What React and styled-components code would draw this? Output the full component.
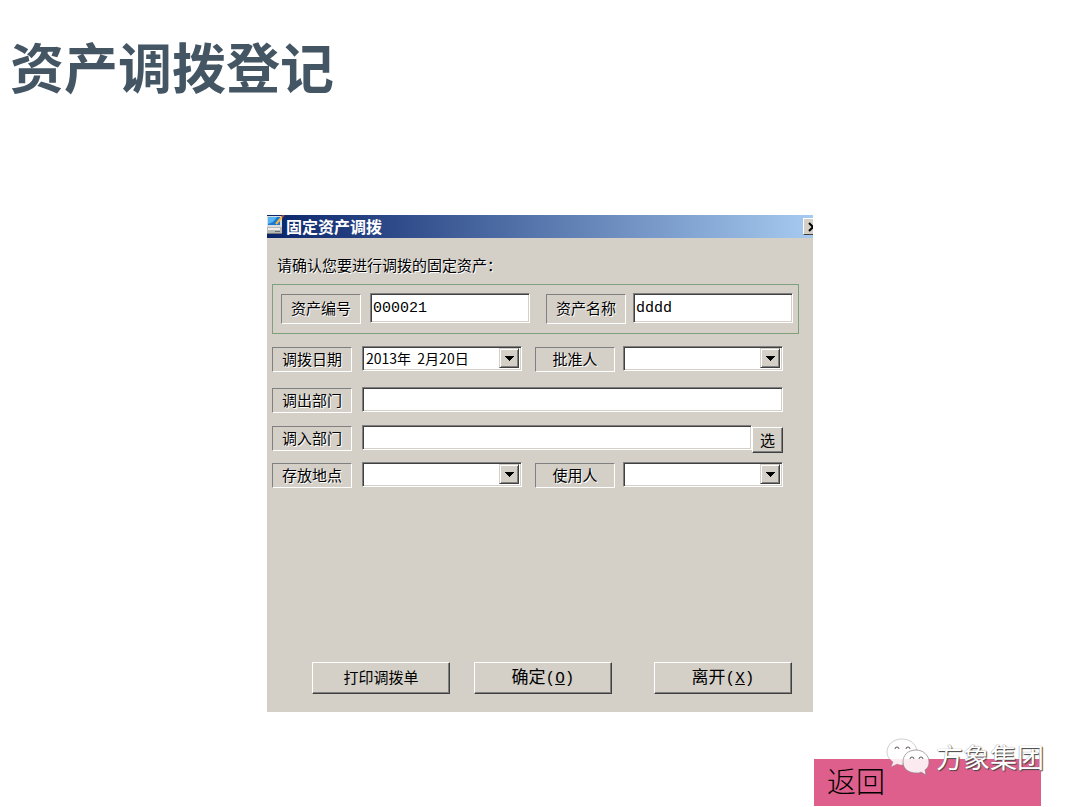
import React, { useState } from "react";
import styled, { createGlobalStyle } from "styled-components";

const assetFields = [
  { id: "assetNo", label: "资产编号", value: "000021" },
  { id: "assetName", label: "资产名称", value: "dddd" },
]

const App = () => {
  const [asset, setAsset] = useState({ assetNo: assetFields[0].value, assetName: assetFields[1].value })

  return (
    <Page>
      <GlobalStyle />
      <Heading>资产调拨登记</Heading>
      <Dialog>
        <TitleBar>
          <AppIcon />
          <DialogTitle>固定资产调拨</DialogTitle>
          <CloseButton type="button" aria-label="关闭">
            <svg width="10" height="10" viewBox="0 0 10 10">
              <path d="M1 1L9 9M9 1L1 9" stroke="#000" strokeWidth="2" />
            </svg>
          </CloseButton>
        </TitleBar>
        <Prompt>请确认您要进行调拨的固定资产：</Prompt>
        <AssetGroup>
          {assetFields.map((item, index) => (
            <React.Fragment key={item.id}>
              <Caption htmlFor={item.id} $tall $before={index ? 16 : 0} $after={index ? 7 : 9}>
                {item.label}
              </Caption>
              <TextField
                id={item.id}
                $tall
                value={asset[item.id]}
                onChange={(e) => setAsset({ ...asset, [item.id]: e.target.value })}
              />
            </React.Fragment>
          ))}
        </AssetGroup>
        <FormRows>
          <Row>
            <Caption htmlFor="date" $after={10}>调拨日期</Caption>
            <DropDown id="date" options={["2013年\u00a0 2月20日"]} />
            <Caption htmlFor="approver" $before={13} $after={8}>批准人</Caption>
            <DropDown id="approver" options={[""]} />
          </Row>
          <Row>
            <Caption htmlFor="fromDept" $after={10}>调出部门</Caption>
            <TextField id="fromDept" />
          </Row>
          <Row>
            <Caption htmlFor="toDept" $after={10}>调入部门</Caption>
            <TextField id="toDept" />
            <PickButton type="button">选</PickButton>
          </Row>
          <Row>
            <Caption htmlFor="place" $after={10}>存放地点</Caption>
            <DropDown id="place" options={[""]} />
            <Caption htmlFor="user" $before={13} $after={8}>使用人</Caption>
            <DropDown id="user" options={[""]} />
          </Row>
        </FormRows>
        <Actions>
          <ActionButton type="button">打印调拨单</ActionButton>
          <ActionButton type="button" $large>确定<Key>(<u>O</u>)</Key></ActionButton>
          <ActionButton type="button" $large $last>离开<Key>(<u>X</u>)</Key></ActionButton>
        </Actions>
      </Dialog>
      <Footer>
        <BackLink href="#back">返回</BackLink>
        <Watermark>
          <ChatLogo />
          <span>方象集团</span>
        </Watermark>
      </Footer>
    </Page>
  )
}

export default App

const DropDown = ({ id, options }) => (
  <SelectBox>
    <Select id={id}>
      {options.map((option, index) => (
        <option key={index}>{option}</option>
      ))}
    </Select>
    <Arrow>
      <svg width="9" height="5" viewBox="0 0 9 5">
        <path d="M0 0H9V1H8V2H7V3H6V4H5V5H4V4H3V3H2V2H1V1H0Z" fill="#000" />
      </svg>
    </Arrow>
  </SelectBox>
)

const AppIcon = () => (
  <svg width="18" height="20" viewBox="0 0 18 20">
    <rect x="0" y="1" width="15" height="11" fill="#d8dde0" />
    <rect x="1" y="2" width="12" height="8" fill="#1c78d0" />
    <path d="M1 2H10L6 7L1 9Z" fill="#55b4f2" />
    <rect x="0" y="12" width="15" height="7" fill="#b9b9b4" />
    <rect x="1" y="13" width="12" height="2" fill="#eeeeea" />
    <rect x="8" y="16" width="5" height="1" fill="#6d7072" />
    <rect x="0" y="18" width="15" height="1" fill="#77797b" />
    <path d="M9 9L15 2" stroke="#f6b53c" strokeWidth="2" />
    <path d="M15 2L17 0" stroke="#a14a34" strokeWidth="2" />
  </svg>
)

const ChatLogo = () => (
  <svg width="44" height="38" viewBox="0 0 44 38">
    <path
      d="M16 1C7 1 1 7 1 14C1 18 3 21 7 24L5 29L11 26C13 27 15 27 17 27C17 19 22 13 31 12C29 5 23 1 16 1Z"
      fill="#fff" fillOpacity="0.88" stroke="#8d8288" strokeOpacity="0.4"
    />
    <path
      d="M30 12C22 12 17 17 17 24C17 31 23 35 30 35C32 35 34 35 35 34L40 37L39 32C42 30 43 27 43 24C43 17 37 12 30 12Z"
      fill="#fff" fillOpacity="0.88" stroke="#8d8288" strokeOpacity="0.7"
    />
    <g fill="none" stroke="#5c5459">
      <path d="M9 11A2 2 0 0 1 13 11M20 11A2 2 0 0 1 24 11" />
      <path d="M24 21A2 2 0 0 1 28 21M33 21A2 2 0 0 1 37 21" />
    </g>
  </svg>
)

const GlobalStyle = createGlobalStyle`
    * {
        box-sizing: border-box;
    }

    body {
        margin: 0;
        background: #fff;
        font-family: "Noto Sans CJK SC", sans-serif;
    }

    button, input, select {
        font-family: inherit;
        color: #000;
    }
`

const Page = styled.main`
    display: flex;
    flex-direction: column;
`

const Heading = styled.h1`
    margin: 0;
    padding: 36px 10px 119px;
    font-size: 54px;
    line-height: 60px;
    font-weight: 700;
    color: #445564;
`

const Dialog = styled.form`
    width: 100%;
    max-width: 546px;
    margin: 0 auto;
    background: #d4d0c8;
    font-size: 15px;
`

const TitleBar = styled.div`
    display: flex;
    align-items: flex-start;
    height: 23px;
    background: linear-gradient(to right, #0a246a, #a6caf0);
`

const DialogTitle = styled.h2`
    margin: 0 auto 0 1px;
    font-size: 16px;
    line-height: 22px;
    font-weight: 700;
    color: #fff;
`

const CloseButton = styled.button`
    display: flex;
    align-items: center;
    width: 10px;
    height: 17px;
    margin-top: 3px;
    padding: 0 0 0 4px;
    overflow: hidden;
    border: solid;
    border-width: 1px 0 1px 1px;
    border-color: #fff #404040 #404040 #fff;
    background: #d4d0c8;

    svg {
        flex: none;
    }
`

const Prompt = styled.p`
    margin: 0;
    padding: 17px 10px 9px;
    line-height: 20px;
    text-shadow: 1px 1px 0 #fff;
`

const AssetGroup = styled.div`
    display: flex;
    margin: 0 14px 0 5px;
    padding: 8px 5px 9px 8px;
    border: 1px solid #7f9f7f;
`

const FormRows = styled.div`
    display: grid;
    grid-template-rows: 41px 38px 37px 25px;
    padding: 12px 30px 0 5px;
`

const Row = styled.div`
    display: flex;
    align-items: flex-start;
`

const Caption = styled.label`
    flex: none;
    width: 80px;
    height: ${(props) => (props.$tall ? 30 : 25)}px;
    margin: 1px ${(props) => props.$after || 0}px 0 ${(props) => props.$before || 0}px;
    border: 1px solid;
    border-color: #808080 #fff #fff #808080;
    line-height: ${(props) => (props.$tall ? 26 : 22)}px;
    text-align: center;
    text-shadow: 1px 1px 0 #fff;
`

const TextField = styled.input`
    flex: 1;
    min-width: 0;
    height: ${(props) => (props.$tall ? 30 : 25)}px;
    padding: 0 2px;
    border: 1px solid;
    border-color: #808080 #fff #fff #808080;
    border-radius: 0;
    outline: none;
    background: #fff;
    box-shadow: inset 1px 1px 0 #404040, inset -1px -1px 0 #d4d0c8;
    font-family: "Liberation Mono", "Noto Sans CJK SC", monospace;
    font-size: 15px;
`

const SelectBox = styled.div`
    flex: 1;
    min-width: 0;
    display: grid;
    height: 25px;
    padding: 1px 2px 2px 1px;
    border: 1px solid;
    border-color: #808080 #fff #fff #808080;
    background: #fff;
    box-shadow: inset 1px 1px 0 #404040, inset -1px -1px 0 #d4d0c8;
`

const Select = styled.select`
    grid-area: 1 / 1;
    min-width: 0;
    padding: 0 2px;
    border: none;
    outline: none;
    appearance: none;
    background: transparent;
    font-size: 14px;
    line-height: 20px;
`

const Arrow = styled.span`
    grid-area: 1 / 1;
    justify-self: end;
    display: grid;
    place-items: center;
    width: 20px;
    border: 1px solid;
    border-color: #d4d0c8 #404040 #404040 #d4d0c8;
    background: #d4d0c8;
    box-shadow: inset 1px 1px 0 #fff, inset -1px -1px 0 #808080;
    pointer-events: none;
`

const RaisedButton = styled.button`
    padding: 0;
    border: 1px solid;
    border-color: #fff #404040 #404040 #fff;
    background: #d4d0c8;
    box-shadow: inset -1px -1px 0 #808080;
`

const PickButton = styled(RaisedButton)`
    width: 31px;
    height: 26px;
    margin-top: 2px;
    font-size: 15px;
    line-height: 24px;
`

const Actions = styled.div`
    display: flex;
    gap: 24px;
    padding: 175px 21px 18px 45px;
`

const ActionButton = styled(RaisedButton)`
    width: 138px;
    height: 32px;
    padding-bottom: 3px;
    margin-left: ${(props) => (props.$last ? "auto" : 0)};
    font-size: ${(props) => (props.$large ? 17 : 15)}px;
    line-height: 26px;
`

const Key = styled.span`
    font-family: "Liberation Mono", monospace;
    font-size: 16px;
`

const Footer = styled.footer`
    position: relative;
    display: flex;
    justify-content: flex-end;
    padding: 47px 39px 0 0;
`

const BackLink = styled.a`
    width: 227px;
    height: 47px;
    padding-left: 13px;
    background: #de5f8c;
    font-size: 29px;
    line-height: 43px;
    font-weight: 300;
    color: #000;
    text-decoration: none;
`

const Watermark = styled.div`
    position: absolute;
    top: 26px;
    right: 36px;
    display: flex;
    align-items: center;
    gap: 6px;
    font-size: 27px;
    line-height: 38px;
    color: #fff;
    text-shadow: 1px 1px 1px #444, 0 0 1px #777;
    pointer-events: none;
`
